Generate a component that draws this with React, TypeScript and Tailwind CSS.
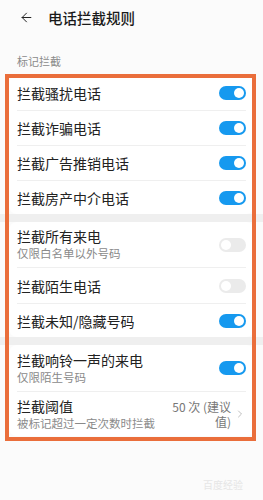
import React from 'react';
import { ArrowLeft, ChevronRight } from 'lucide-react';

type Row = { title: string; sub?: string; on?: boolean; value?: string; h: string };

const groups: Row[][] = [
    [
        { title: '拦截骚扰电话', on: true, h: 'h-[35px]' },
        { title: '拦截诈骗电话', on: true, h: 'h-[35px]' },
        { title: '拦截广告推销电话', on: true, h: 'h-[35px]' },
        { title: '拦截房产中介电话', on: true, h: 'h-[34px]' },
    ],
    [
        { title: '拦截所有来电', sub: '仅限白名单以外号码', on: false, h: 'h-[45px]' },
        { title: '拦截陌生电话', on: false, h: 'h-[36px]' },
        { title: '拦截未知/隐藏号码', on: true, h: 'h-[34px]' },
    ],
    [
        { title: '拦截响铃一声的来电', sub: '仅限陌生号码', on: true, h: 'h-[46px]' },
        { title: '拦截阈值', sub: '被标记超过一定次数时拦截', value: '50 次 (建议值)', h: 'h-[45px]' },
    ],
];

function Toggle({ on }: { on: boolean }) {
    return (
        <div className={`w-[27px] h-[14px] rounded-full flex items-center px-[2px] ${on ? 'bg-[#1699ef] justify-end' : 'bg-[#ebebeb] justify-start'}`}>
            <div className="w-[10px] h-[10px] rounded-full bg-white" />
        </div>
    );
}

export default function App() {
    return (
        <div className="w-[263px] h-[500px] bg-[#fbfbfb] relative overflow-hidden" style={{ fontFamily: '"Noto Sans CJK SC", "Noto Sans", sans-serif' }}>
            <div className="h-[35px] flex items-center pl-[19px]">
                <ArrowLeft size={15} strokeWidth={1.6} className="text-[#222]" />
                <span className="ml-[14px] text-[14.5px] font-medium text-[#1a1a1a]">电话拦截规则</span>
            </div>
            <div className="h-[40px] flex items-center pl-[17px] pt-[12px]">
                <span className="text-[11px] text-[#8a8a8a]">标记拦截</span>
            </div>
            {groups.map((rows, gi) => (
                <div key={gi}>
                    {gi > 0 && <div className="h-[8px] bg-[#efefef]" />}
                    <div className="bg-white mx-[9px] rounded-[8px] px-[8px]">
                        {rows.map((r, ri) => (
                            <div key={r.title} className={`${r.h} flex items-center ${ri > 0 ? 'border-t border-[#efefef]' : ''}`}>
                                <div className="flex-1 flex flex-col justify-center">
                                    <span className="text-[14px] leading-[18px] text-[#222]">{r.title}</span>
                                    {r.sub && <span className="text-[11.5px] leading-[17px] text-[#8a8a8a]">{r.sub}</span>}
                                </div>
                                {r.value ? (
                                    <div className="flex items-center">
                                        <span className="w-[62px] text-right text-[12px] leading-[15px] text-[#777]">{r.value}</span>
                                        <ChevronRight size={12} strokeWidth={1.5} className="text-[#aaa] ml-[3px]" />
                                    </div>
                                ) : (
                                    <Toggle on={!!r.on} />
                                )}
                            </div>
                        ))}
                    </div>
                </div>
            ))}
            <div className="absolute left-[5px] top-[74px] w-[251px] h-[367px] border-[4px] border-[#ea6e3b] pointer-events-none" />
            <div className="absolute right-[20px] bottom-[8px] text-[10px] text-[#e6e6e6]">百度经验</div>
        </div>
    );
}
